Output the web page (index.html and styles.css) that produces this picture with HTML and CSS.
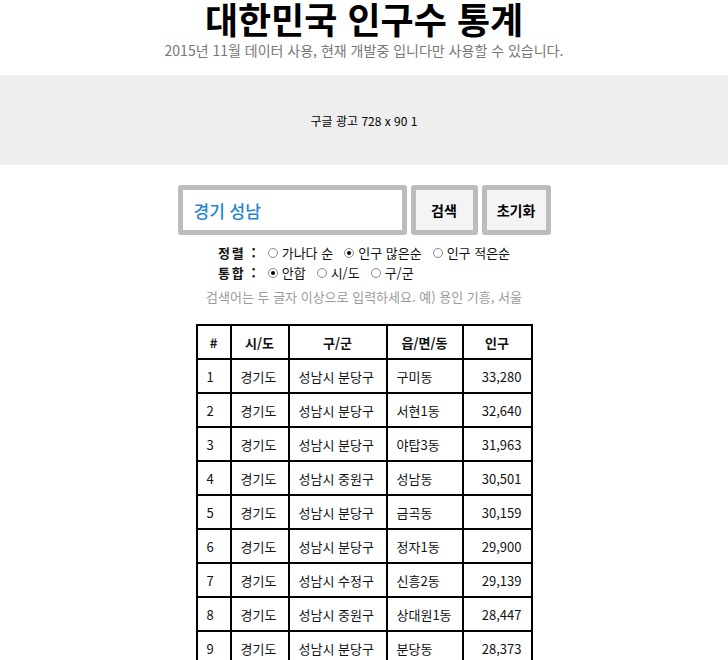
FILE: index.html
```html
<!DOCTYPE html>
<html lang="ko">
<head>
<meta charset="utf-8">
<title>대한민국 인구수 통계</title>
<link rel="stylesheet" href="styles.css">
</head>
<body>
<header class="head">
  <h1 class="title">대한민국 인구수 통계</h1>
  <p class="sub">2015년 11월 데이터 사용, 현재 개발중 입니다만 사용할 수 있습니다.</p>
</header>
<div class="ad">구글 광고 728 x 90 1</div>
<div class="search">
  <div class="query">경기 성남</div>
  <button class="btn">검색</button>
  <button class="btn">초기화</button>
</div>
<div class="opts">
  <div class="opt-block">
    <div class="opt-row"><b class="lbl">정렬 :</b><span class="radio"></span>가나다 순<span class="radio on"></span>인구 많은순<span class="radio"></span>인구 적은순</div>
    <div class="opt-row"><b class="lbl">통합 :</b><span class="radio on"></span>안합<span class="radio"></span>시/도<span class="radio"></span>구/군</div>
  </div>
</div>
<p class="hint">검색어는 두 글자 이상으로 입력하세요. 예) 용인 기흥, 서울</p>
<table class="tbl">
  <thead>
    <tr><th class="c1">#</th><th class="c2">시/도</th><th class="c3">구/군</th><th class="c4">읍/면/동</th><th class="c5">인구</th></tr>
  </thead>
  <tbody>
    <tr><td>1</td><td>경기도</td><td>성남시 분당구</td><td>구미동</td><td class="num">33,280</td></tr>
    <tr><td>2</td><td>경기도</td><td>성남시 분당구</td><td>서현1동</td><td class="num">32,640</td></tr>
    <tr><td>3</td><td>경기도</td><td>성남시 분당구</td><td>야탑3동</td><td class="num">31,963</td></tr>
    <tr><td>4</td><td>경기도</td><td>성남시 중원구</td><td>성남동</td><td class="num">30,501</td></tr>
    <tr><td>5</td><td>경기도</td><td>성남시 분당구</td><td>금곡동</td><td class="num">30,159</td></tr>
    <tr><td>6</td><td>경기도</td><td>성남시 분당구</td><td>정자1동</td><td class="num">29,900</td></tr>
    <tr><td>7</td><td>경기도</td><td>성남시 수정구</td><td>신흥2동</td><td class="num">29,139</td></tr>
    <tr><td>8</td><td>경기도</td><td>성남시 중원구</td><td>상대원1동</td><td class="num">28,447</td></tr>
    <tr><td>9</td><td>경기도</td><td>성남시 분당구</td><td>분당동</td><td class="num">28,373</td></tr>
  </tbody>
</table>
</body>
</html>
```
FILE: styles.css
```css
html, body {
  margin: 0;
  padding: 0;
  background: #fff;
}
body {
  font-family: "Noto Sans CJK KR", "Noto Sans", sans-serif;
  font-size: 13px;
  color: #111;
}
.head {
  text-align: center;
}
.title {
  margin: 0;
  font-size: 36px;
  font-weight: 700;
  line-height: 36px;
  height: 36px;
  color: #000;
}
.sub {
  margin: 5px 0 0;
  line-height: 18px;
  color: #777;
  font-size: 14px;
}
.ad {
  margin-top: 16px;
  height: 90px;
  background: #eeeeee;
  display: flex;
  align-items: center;
  justify-content: center;
  font-size: 12px;
  color: #000;
}
.search {
  margin-top: 20px;
  display: flex;
  justify-content: center;
  gap: 4px;
}
.query {
  box-sizing: border-box;
  width: 229px;
  height: 50px;
  border: 5px solid #bcbcbc;
  border-radius: 3px;
  background: #fff;
  padding-left: 11px;
  display: flex;
  align-items: center;
  font-size: 17px;
  font-weight: 500;
  color: #1f86cf;
}
.btn {
  box-sizing: border-box;
  height: 50px;
  width: 67px;
  border: 5px solid #bcbcbc;
  border-radius: 3px;
  background: #f4f4f4;
  font-family: inherit;
  font-size: 14px;
  font-weight: 700;
  color: #000;
  padding: 0;
}
.btn + .btn {
  width: 69px;
}
.opts {
  margin-top: 8px;
  display: flex;
  justify-content: center;
}
.opt-row {
  display: flex;
  align-items: center;
  line-height: 20px;
  height: 20px;
  white-space: pre;
}
.lbl {
  font-weight: 700;
  margin-right: 10px;
  letter-spacing: 2px;
}
.radio {
  box-sizing: border-box;
  display: inline-block;
  width: 10px;
  height: 10px;
  border: 1px solid #8a8a8a;
  border-radius: 50%;
  margin: 0 4px 0 11px;
  position: relative;
  background: #fff;
}
.lbl + .radio {
  margin-left: 0;
}
.radio.on::after {
  content: "";
  position: absolute;
  left: 2px;
  top: 2px;
  width: 4px;
  height: 4px;
  border-radius: 50%;
  background: #000;
}
.hint {
  margin: 4px 0 0;
  line-height: 20px;
  text-align: center;
  color: #9a9a9a;
}
.tbl {
  margin: 17px auto 0;
  border: 1px solid #000;
  border-spacing: 0;
  font-size: 13px;
}
.tbl th, .tbl td {
  border: 1px solid #000;
  height: 34px;
  padding: 0 9px;
  box-sizing: border-box;
  text-align: left;
}
.tbl th {
  text-align: center;
  font-weight: 700;
}
.tbl .num {
  text-align: right;
}
.c1 { width: 34px; }
.c2 { width: 58px; }
.c3 { width: 98px; }
.c4 { width: 76px; }
.c5 { width: 69px; }
```
